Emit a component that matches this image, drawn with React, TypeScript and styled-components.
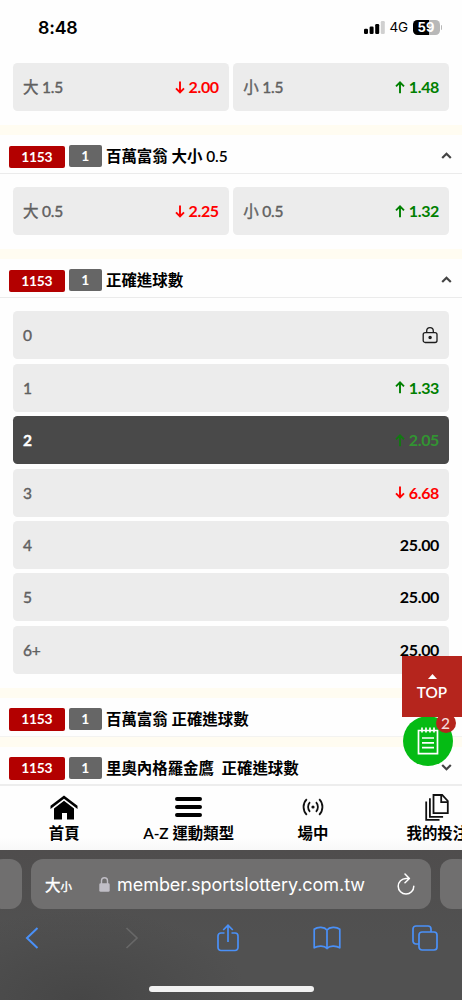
import React from 'react';
import styled, { createGlobalStyle, css } from 'styled-components';

const Global = createGlobalStyle`
  * { box-sizing: border-box; }
  body { margin: 0; background: #fff; }
  svg { display: block; flex: none; }
`;

const Screen = styled.div`
  position: relative;
  width: 462px;
  height: 1000px;
  overflow: hidden;
  display: flex;
  flex-direction: column;
  background: #fefefe;
  font-family: Lato, 'Noto Sans CJK TC', sans-serif;
  font-size: 15.5px;
  color: #000;
`;

const StatusBar = styled.header`
  flex: none;
  height: 55px;
  display: flex;
  justify-content: space-between;
  padding: 0 20px 0 38px;
  font-family: Inter, sans-serif;
`;

const Clock = styled.div`
  font-size: 17.8px;
  font-weight: 600;
  line-height: 56px;
  letter-spacing: -0.2px;
`;

const StatusIcons = styled.div`
  display: flex;
  align-items: center;
`;

const Network = styled.span`
  font-size: 13.5px;
  font-weight: 400;
  line-height: 57px;
  width: 23px;
  margin-left: 4.5px;
  letter-spacing: -0.1px;
`;

const Battery = styled.div`
  width: 27px;
  height: 15px;
  border-radius: 4.5px;
  background: linear-gradient(90deg, #000 59%, #b8b8b8 59%);
  color: #fff;
  font-size: 13px;
  font-weight: 700;
  line-height: 15px;
  text-align: center;
`;

const BatteryTip = styled.i`
  width: 1.5px;
  height: 5px;
  margin-left: 1px;
  border-radius: 0 2px 2px 0;
  background: #b8b8b8;
`;

const Content = styled.main`
  flex: none;
  height: 729px;
  overflow: hidden;
`;

const Gap = styled.div`
  height: 10px;
  background: #fffcf1;
`;

const MarketHead = styled.div<{ $open?: boolean }>`
  height: 39px;
  display: flex;
  align-items: center;
  padding: 4px 10px 0 9px;
  border-bottom: 1px solid ${p => (p.$open ? '#ebebeb' : '#f3f3f1')};
  background: #fefefe;
`;

const Code = styled.span`
  width: 55.5px;
  height: 22.5px;
  margin-top: 2px;
  border-radius: 2px;
  background: #b30000;
  color: #fff;
  font-size: 13.8px;
  font-weight: 700;
  letter-spacing: -0.2px;
  line-height: 22.5px;
  text-align: center;
`;

const Count = styled(Code)`
  width: 32.5px;
  height: 22px;
  margin: 0 0 0 4.5px;
  background: #666;
`;

const Title = styled.h2`
  flex: 1;
  margin: 0 0 0 4.5px;
  font-size: 15.45px;
  font-weight: 600;
  letter-spacing: -0.02px;
  line-height: 22px;
  white-space: pre;
`;

const Options = styled.div<{ $columns: number; $first?: boolean }>`
  display: grid;
  grid-template-columns: repeat(${p => p.$columns}, 1fr);
  gap: 4.45px;
  padding: ${p => (p.$first ? '8.3px' : '13.3px')} 13px 13.7px;
`;

const Option = styled.div<{ $selected?: boolean }>`
  height: 48px;
  display: flex;
  align-items: center;
  justify-content: space-between;
  padding: 0 10px;
  border-radius: 4.5px;
  background: ${p => (p.$selected ? '#494949' : '#ececec')};
  color: ${p => (p.$selected ? '#fff' : '#606060')};
  font-weight: ${p => (p.$selected ? 700 : 400)};
  line-height: 22px;
`;

const Label = styled.span`
  letter-spacing: -0.2px;
  -webkit-text-stroke: 0.4px currentColor;
`;

const tones = { up: '#008000', down: '#f00', flat: '#000', picked: '#329432' };

const Odds = styled.span<{ $tone: keyof typeof tones }>`
  display: flex;
  align-items: center;
  gap: 3.8px;
  color: ${p => tones[p.$tone]};
  font-weight: 700;
  font-size: 16px;
  letter-spacing: -0.35px;
`;

const TabBar = styled.nav`
  flex: none;
  height: 66px;
  display: flex;
  padding-left: 2px;
  border-top: 2px solid #ededed;
  background: linear-gradient(#fefefe 80%, #f8f8f8);
`;

const Tab = styled.a`
  flex: 0 0 124.4px;
  display: flex;
  flex-direction: column;
  align-items: center;
  white-space: nowrap;
  font-weight: 600;
  font-size: 15.4px;
  line-height: 22px;
`;

const TabIcon = styled.span`
  height: 36px;
  padding-top: 6px;
  display: flex;
  align-items: center;
`;

const Browser = styled.footer`
  flex: none;
  height: 150px;
  display: flex;
  flex-direction: column;
  align-items: center;
  padding-top: 9px;
  background: radial-gradient(ellipse 170px 90px at 80px 150px, #464646, transparent), linear-gradient(#4f4d4d, #515151 60%);
`;

const AddressRow = styled.div`
  width: 480px;
  display: flex;
  justify-content: center;
  gap: 9px;
`;

const field = css`
  height: 50px;
  border-radius: 12px;
  background: #706f6f;
`;

const Neighbor = styled.div`
  ${field}
  width: 31px;
`;

const Address = styled.div`
  ${field}
  width: 400px;
  display: flex;
  align-items: center;
  padding: 0 16px 0 14px;
  color: #fff;
`;

const TextSize = styled.span`
  width: 54px;
  font-family: 'Noto Sans CJK TC', sans-serif;
  font-size: 15.5px;
  font-weight: 400;
  -webkit-text-stroke: 0.4px currentColor;
  small { font-size: 11.5px; }
`;

const Url = styled.span`
  flex: 1;
  margin-left: 7px;
  font-family: Inter, sans-serif;
  font-size: 18px;
  letter-spacing: -0.05px;
`;

const Tools = styled.div`
  width: 491px;
  height: 57px;
  margin-right: 5px;
  display: grid;
  grid-template-columns: repeat(5, 1fr);
  align-items: center;
  justify-items: center;
  color: #4a90f7;
`;

const HomeIndicator = styled.div`
  width: 165px;
  height: 6px;
  margin-top: 19.5px;
  border-radius: 3px;
  background: #f1f1f1;
`;

const BetSlip = styled.div`
  position: absolute;
  left: 403px;
  top: 715.5px;
  width: 50px;
  height: 50px;
  display: flex;
  align-items: center;
  justify-content: center;
  border-radius: 50%;
  background: #05bb14;
`;

const SlipCount = styled.span`
  position: absolute;
  left: 32.5px;
  top: -2.5px;
  width: 20px;
  height: 20px;
  border-radius: 50%;
  background: #b5251d;
  color: #f4dcdb;
  font-size: 15.5px;
  font-weight: 500;
  line-height: 20px;
  text-align: center;
`;

const TopButton = styled.button`
  position: absolute;
  left: 402px;
  top: 656px;
  width: 60px;
  height: 60.5px;
  padding: 18px 0 0;
  display: flex;
  flex-direction: column;
  align-items: center;
  gap: 3px;
  border: 0;
  background: #b5251d;
  color: #fff;
  font: 600 15.3px/20px Lato, sans-serif;
`;

const Arrow = ({ up, color }: { up?: boolean; color?: string }) => (
  <svg width="10" height="13" viewBox="0 0 10 13" fill="none" stroke={color || 'currentColor'} strokeWidth="1.9">
    <path d={up ? 'M5 12.2V1.6M1 5.4l4-4 4 4' : 'M5 .6v11M1 7.4l4 4 4-4'} />
  </svg>
);

const Chevron = ({ down }: { down?: boolean }) => (
  <svg width="11" height="7" viewBox="0 0 11 7" fill="none" stroke="#444" strokeWidth="2.2">
    <path d={down ? 'M1.2 1l4.3 4.2L9.8 1' : 'M1.2 6l4.3-4.2L9.8 6'} />
  </svg>
);

const Padlock = () => (
  <svg width="17" height="17" viewBox="0 0 17 17" fill="none" stroke="#1c1c1c" strokeWidth="1.3">
    <rect x="1.2" y="5.6" width="13.8" height="9.9" rx="2" />
    <path d="M4.7 5.5V4a3.3 3.3 0 0 1 6.6 0v1.5" />
    <circle cx="8.1" cy="10.5" r="1.1" fill="#1c1c1c" />
  </svg>
);

type Item = { label: string; odds?: string; tone?: keyof typeof tones };

const OptionCell = ({ label, odds, tone = 'flat' }: Item) => (
  <Option $selected={tone === 'picked'}>
    <Label>{label}</Label>
    {odds ? (
      <Odds $tone={tone}>
        {tone !== 'flat' && <Arrow up={tone !== 'down'} color={tone === 'picked' ? '#117a11' : undefined} />}
        {odds}
      </Odds>
    ) : <Padlock />}
  </Option>
);

const Market = ({ title, items, columns = 1 }: { title: string; items?: Item[]; columns?: number }) => (
  <section>
    <MarketHead $open={!!items}>
      <Code>1153</Code>
      <Count>1</Count>
      <Title>{title}</Title>
      <Chevron down={!items} />
    </MarketHead>
    {items && <Options $columns={columns}>{items.map(i => <OptionCell key={i.label} {...i} />)}</Options>}
  </section>
);

const goals: Item[] = [
  { label: '0' },
  { label: '1', odds: '1.33', tone: 'up' },
  { label: '2', odds: '2.05', tone: 'picked' },
  { label: '3', odds: '6.68', tone: 'down' },
  { label: '4', odds: '25.00' },
  { label: '5', odds: '25.00' },
  { label: '6+', odds: '25.00' },
];

export default function App() {
  return (
    <Screen>
      <Global />
      <StatusBar>
        <Clock>8:48</Clock>
        <StatusIcons>
          <svg width="21" height="13" viewBox="0 0 21 13">
            <rect x="0" y="7.8" width="4" height="5.2" rx="1.2" />
            <rect x="5.6" y="5.6" width="4" height="7.4" rx="1.2" />
            <rect x="11.2" y="3" width="4" height="10" rx="1.2" />
            <rect x="16.8" y="0" width="4" height="13" rx="1.2" fill="#d0d0d0" />
          </svg>
          <Network>4G</Network>
          <Battery>59</Battery>
          <BatteryTip />
        </StatusIcons>
      </StatusBar>

      <Content>
        <Options $columns={2} $first>
          <OptionCell label="大 1.5" odds="2.00" tone="down" />
          <OptionCell label="小 1.5" odds="1.48" tone="up" />
        </Options>
        <Gap />
        <Market
          title="百萬富翁 大小 0.5"
          columns={2}
          items={[
            { label: '大 0.5', odds: '2.25', tone: 'down' },
            { label: '小 0.5', odds: '1.32', tone: 'up' },
          ]}
        />
        <Gap />
        <Market title="正確進球數" items={goals} />
        <Gap />
        <Market title="百萬富翁 正確進球數" />
        <Gap />
        <Market title="里奧內格羅金鷹  正確進球數" />
      </Content>

      <TabBar>
        <Tab>
          <TabIcon>
            <svg width="28" height="25" viewBox="0 0 28 25">
              <path d="M0.5 14V10.8L14 .4 27.5 10.8V14L14 3.8Z" />
              <path d="M4 13.4 14 5.7 24 13.4v11.1h-7V18h-5v6.5H4Z" />
            </svg>
          </TabIcon>
          首頁
        </Tab>
        <Tab>
          <TabIcon>
            <svg width="27" height="20" viewBox="0 0 27 20" stroke="#000" strokeWidth="4" strokeLinecap="round">
              <path d="M2 2h23M2 10h23M2 18h23" />
            </svg>
          </TabIcon>
          A-Z 運動類型
        </Tab>
        <Tab>
          <TabIcon>
            <svg width="22" height="18" viewBox="0 0 22 18" fill="none" stroke="#111" strokeWidth="1.8">
              <circle cx="11" cy="9" r="1.6" fill="#111" stroke="none" />
              <path d="M4.8 1.2a11 11 0 0 0 0 15.6M17.2 1.2a11 11 0 0 1 0 15.6M8 4.2a7 7 0 0 0 0 9.6M14 4.2a7 7 0 0 1 0 9.6" />
            </svg>
          </TabIcon>
          場中
        </Tab>
        <Tab>
          <TabIcon>
            <svg width="24" height="27" viewBox="0 0 24 27" fill="none" stroke="#111" strokeWidth="1.8">
              <path d="M8.5 1h8.7l5.6 6v12.2H8.5ZM16.2 1v7.2h6.6M4.9 4.2v18.7h13.2M1.2 7.5v18.3h13.3" />
            </svg>
          </TabIcon>
          我的投注
        </Tab>
      </TabBar>

      <Browser>
        <AddressRow>
          <Neighbor />
          <Address>
            <TextSize>大<small>小</small></TextSize>
            <svg width="11" height="15" viewBox="0 0 11 15">
              <rect x=".3" y="6.3" width="10.4" height="8.5" rx="1.4" fill="#c0bec6" />
              <path d="M2.5 7V3.8a3 3 0 0 1 6 0V7" fill="none" stroke="#c0bec6" strokeWidth="1.4" />
            </svg>
            <Url>member.sportslottery.com.tw</Url>
            <svg width="18" height="23" viewBox="0 0 18 23" fill="none" stroke="#fff" strokeWidth="1.5" strokeLinecap="round" strokeLinejoin="round">
              <path d="M12 5.6 9 5.5A7.8 7.8 0 1 0 16.8 13.3M8 1l4.4 4.5L8 9.7" />
            </svg>
          </Address>
          <Neighbor />
        </AddressRow>
        <Tools>
          <svg width="14" height="22" viewBox="0 0 14 22" fill="none" stroke="currentColor" strokeWidth="2">
            <path d="M12.5 1 2 11l10.5 10" />
          </svg>
          <svg width="18" height="22" viewBox="0 0 18 22" fill="none" stroke="#686868" strokeWidth="1.7">
            <path d="M5.5 1 16 11 5.5 21" />
          </svg>
          <svg width="22" height="28" viewBox="0 0 22 28" fill="none" stroke="currentColor" strokeWidth="1.7">
            <path d="M7.5 9H4a3 3 0 0 0-3 3v11.5a3 3 0 0 0 3 3h14a3 3 0 0 0 3-3V12a3 3 0 0 0-3-3h-3.5M11 18V1.5M6.2 6 11 1.3 15.8 6" />
          </svg>
          <svg width="28" height="24" viewBox="0 0 28 24" fill="none" stroke="currentColor" strokeWidth="1.7" strokeLinejoin="round">
            <path d="M14 4C11.5.8 4.8.5 1.2 3.2v18.6C5 19.5 11.5 19.5 14 22.5c2.5-3 9-3 12.8-.7V3.2C23.2.5 16.5.8 14 4Zm0 0v18.5" />
          </svg>
          <svg width="26" height="26" viewBox="0 0 26 26" fill="none" stroke="currentColor" strokeWidth="1.7">
            <rect x="7" y="7" width="18" height="18" rx="3" />
            <path d="M7 19H4a3 3 0 0 1-3-3V4a3 3 0 0 1 3-3h12a3 3 0 0 1 3 3v3" />
          </svg>
        </Tools>
        <HomeIndicator />
      </Browser>

      <BetSlip>
        <svg width="22" height="28" viewBox="0 0 22 28" fill="none" stroke="#fff" strokeWidth="1.7">
          <path d="M1.5 3.5h19v23.2h-19ZM5 .5v5M9 .5v5M13 .5v5M17 .5v5M5 11h12M5 15.8h12M5 20.6h12" />
        </svg>
        <SlipCount>2</SlipCount>
      </BetSlip>
      <TopButton>
        <svg width="9" height="5" viewBox="0 0 9 5" fill="#fff"><path d="M0 5 4.5 0 9 5Z" /></svg>
        TOP
      </TopButton>
    </Screen>
  );
}
